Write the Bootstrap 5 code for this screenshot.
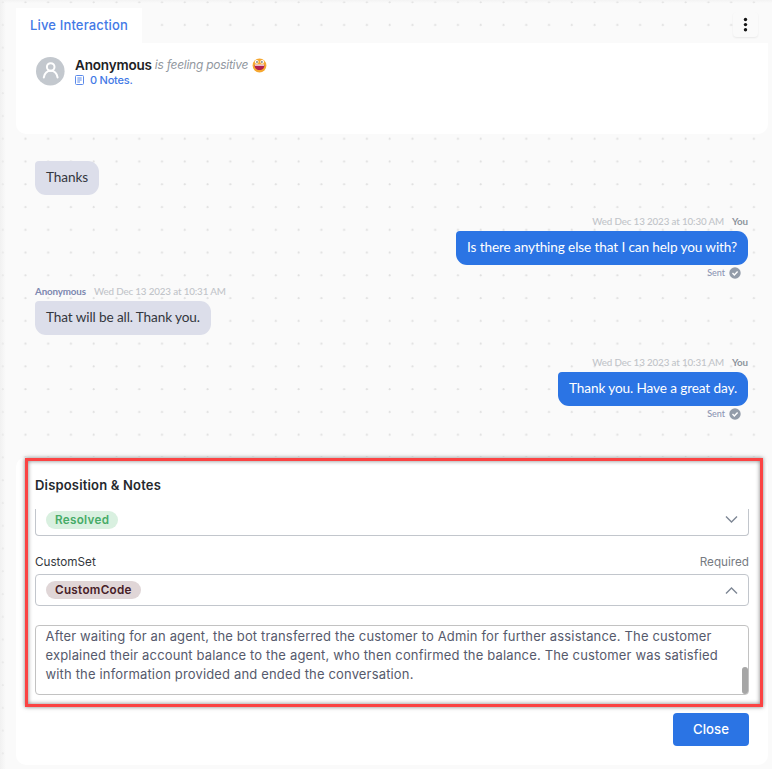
<!DOCTYPE html>
<html lang="en">
<head>
<meta charset="utf-8">
<meta name="viewport" content="width=device-width, initial-scale=1">
<title>Live Interaction</title>
<link href="https://cdn.jsdelivr.net/npm/bootstrap@5.3.0/dist/css/bootstrap.min.css" rel="stylesheet">
<style>
body{width:772px;height:769px;overflow:hidden;font-family:Inter,"Liberation Sans",sans-serif;color:#202124;background:#fafafa}
.desk{height:769px;padding:8px 4px 4px 16px;
 background:linear-gradient(90deg,#f1f1f1,rgba(250,250,250,0) 6px),linear-gradient(#f3f3f3,rgba(250,250,250,0) 3px),radial-gradient(circle at 2.6px 2.2px,#dedede 0,#e2e2e2 .8px,rgba(250,250,250,0) 1.4px) 0 0/22.78px 22.78px,#fafafa}
.top-row{height:35px}
.tab-live{width:126px;height:35px;font-size:13px;font-weight:500;color:#4379e6;letter-spacing:.15px}
.kebab{width:25px;height:25px;border-radius:4px;background:#fafafa;box-shadow:0 1px 2px rgba(0,0,0,.07);margin:4px 10px 0 0}
.person{height:91px;padding:13px 20px;border-radius:0 0 10px 10px}
.person-info{padding:1px 0 0 10px}
.person-name{font-size:13.5px;font-weight:600;line-height:16px;letter-spacing:-.17px}
.mood{font-size:12px;font-style:italic;color:#92989f;line-height:16px;margin-left:3px;letter-spacing:-.26px}
.notes{font-size:11px;font-weight:500;line-height:14px;color:#4379e6;letter-spacing:-.22px}
.notes span{margin-left:6px}
.chat{height:323px;padding:27px 20px 0 19px;font-family:Lato,sans-serif}
.bubble{height:34px;padding:0 11px;font-size:13.6px;line-height:32px;letter-spacing:-.11px;white-space:nowrap;border-radius:4px 11px 11px 11px}
.bubble-in{background:#dcdeea;color:#33373e}
.bubble-out{background:#2b74e4;color:#fff}
.meta{font-size:9.8px;line-height:14px;height:17px;color:#c1c4c9;font-weight:500;letter-spacing:-.14px}
.meta b{color:#7d88b0}
.meta b.you{color:#8d949d}
.sent{font-size:9px;line-height:16px;height:16px;color:#8d96b5;padding-right:7px;font-weight:500}
.m1{height:53px}.m2{height:70px}.m3{height:71px}
.panel{height:308px;border-radius:10px;padding:1px 4px 0 9px}
.marked{height:249px;width:738px;border:3px solid #fb4343;box-shadow:0 0 4px rgba(0,0,0,.5),inset 0 0 4px rgba(0,0,0,.5);padding:0 11px 0 7px}
.panel-title{font-size:13px;font-weight:600;line-height:18px;padding-top:15px;height:48px;color:#25282d;letter-spacing:.18px}
.field{border:1px solid #c2c6cc;border-radius:4px;padding:0 10px}
.field-cut{border-top:0;border-radius:0 0 4px 4px;height:27px;padding-bottom:5px}
.field-full{height:32px}
.pill{height:18px;line-height:18px;border-radius:9px;font-size:11.7px;font-weight:600;padding:0 9px;letter-spacing:.3px}
.pill-green{background:#d9f0e0;color:#46ab67}
.pill-rose{background:#e0d6d7;color:#472027}
.labels{height:38px;padding-top:18px;font-size:11.7px;line-height:16px;color:#33373d}
.req{color:#777b82}
.summary{height:70px;margin-top:19px;border:1px solid #c2c2c2;border-radius:4px;padding:1px 9.500px;font-size:13px;line-height:19px;color:#565a6c;white-space:nowrap;position:relative;letter-spacing:.16px}
.summary div{width:max-content}
.thumb{position:absolute;right:0;bottom:0;width:6px;height:27px;border-radius:3px;background:#a6a6a6}
.close-btn{width:76px;height:33px;margin:6px 15px 0 0;background:#2b74e4;border:0;border-radius:4px;color:#fff;font-size:13.2px;font-weight:500;padding:1px 0 0}
</style>
</head>
<body>
<main class="desk">
 <header>
  <div class="top-row d-flex justify-content-between">
   <div class="tab-live bg-white d-flex align-items-center justify-content-center">Live Interaction</div>
   <div class="kebab d-flex align-items-center justify-content-center"><svg width="5" height="15" viewBox="0 0 5 15" fill="#151515"><circle cx="2.5" cy="2.5" r="1.7"/><circle cx="2.5" cy="7.6" r="1.7"/><circle cx="2.5" cy="12.7" r="1.7"/></svg></div>
  </div>
  <div class="person bg-white d-flex align-items-start">
   <svg class="flex-shrink-0" width="29" height="30" viewBox="0 0 29 30" fill="none"><circle cx="14.3" cy="15.2" r="14.3" fill="#c3c8ce"/><g stroke="#fff" stroke-width="2" stroke-linecap="round"><circle cx="14.7" cy="11" r="3.8"/><path d="M7.800 21.500C8.700 16.900 11 14.800 14.700 14.800s6 2.100 6.900 6.700"/></g></svg>
   <div class="person-info flex-grow-1">
    <div class="d-flex align-items-center"><span class="person-name">Anonymous</span><span class="mood">is feeling positive</span>
     <svg class="ms-1" width="15" height="15" viewBox="0 0 15 15"><circle cx="7.5" cy="7.5" r="6.9" fill="#f6a831"/><path d="M2.600 6.800h9.800c.2 3.600-1.900 5.200-4.900 5.200S2.400 10.400 2.600 6.800Z" fill="#b3204f"/><path d="M2.900 6.500h9.200v1.200H2.900z" fill="#fff"/><circle cx="4.700" cy="3.800" r="1.900" fill="#fff"/><circle cx="10.200" cy="3.800" r="1.900" fill="#fff"/><circle cx="5" cy="4" r=".8" fill="#333"/><circle cx="9.900" cy="4" r=".8" fill="#333"/></svg></div>
    <div class="notes d-flex align-items-center"><svg width="9" height="10" viewBox="0 0 9 10" fill="none" stroke="#5b8aea" stroke-width="1"><rect x=".5" y=".5" width="8" height="9" rx="1"/><path d="M2.300 3h4.400M2.300 5h4.400M2.300 7h2.700"/></svg><span>0 Notes.</span></div>
   </div>
  </div>
 </header>
 <section class="chat">
  <div class="m1 d-flex"><div class="bubble bubble-in">Thanks</div></div>
  <div class="m2 d-flex flex-column align-items-end">
   <div class="meta">Wed Dec 13 2023 at 10:30 AM<b class="you ms-2">You</b></div>
   <div class="bubble bubble-out">Is there anything else that I can help you with?</div>
   <div class="sent d-flex align-items-center">Sent<svg class="ms-1" width="12" height="12" viewBox="0 0 12 12"><circle cx="6" cy="6" r="5.700" fill="#939ca9"/><path d="M3.500 6.100l1.800 1.800 3.300-3.500" fill="none" stroke="#fff" stroke-width="1.400"/></svg></div>
  </div>
  <div class="m3 d-flex flex-column align-items-start">
   <div class="meta"><b class="me-2">Anonymous</b>Wed Dec 13 2023 at 10:31 AM</div>
   <div class="bubble bubble-in">That will be all. Thank you.</div>
  </div>
  <div class="d-flex flex-column align-items-end">
   <div class="meta">Wed Dec 13 2023 at 10:31 AM<b class="you ms-2">You</b></div>
   <div class="bubble bubble-out">Thank you. Have a great day.</div>
   <div class="sent d-flex align-items-center">Sent<svg class="ms-1" width="12" height="12" viewBox="0 0 12 12"><circle cx="6" cy="6" r="5.700" fill="#939ca9"/><path d="M3.500 6.100l1.800 1.800 3.300-3.500" fill="none" stroke="#fff" stroke-width="1.400"/></svg></div>
  </div>
 </section>
 <section class="panel bg-white">
  <div class="marked">
   <div class="panel-title">Disposition &amp; Notes</div>
   <div class="field field-cut d-flex align-items-center justify-content-between"><span class="pill pill-green">Resolved</span><svg width="13" height="9" viewBox="0 0 13 9" fill="none" stroke="#7e8795" stroke-width="1.400"><path d="M1 1.500l5.500 5.500L12 1.500"/></svg></div>
   <div class="labels d-flex justify-content-between"><span>CustomSet</span><span class="req">Required</span></div>
   <div class="field field-full d-flex align-items-center justify-content-between"><span class="pill pill-rose">CustomCode</span><svg width="13" height="9" viewBox="0 0 13 9" fill="none" stroke="#7e8795" stroke-width="1.400"><path d="M1 7.500L6.500 2 12 7.500"/></svg></div>
   <div class="summary"><div>After waiting for an agent, the bot transferred the customer to Admin for further assistance. The customer</div><div>explained their account balance to the agent, who then confirmed the balance. The customer was satisfied</div><div>with the information provided and ended the conversation.</div><span class="thumb"></span></div>
  </div>
  <div class="d-flex justify-content-end"><button class="close-btn btn">Close</button></div>
 </section>
</main>
<script src="https://cdn.jsdelivr.net/npm/bootstrap@5.3.0/dist/js/bootstrap.bundle.min.js"></script>
</body>
</html>
